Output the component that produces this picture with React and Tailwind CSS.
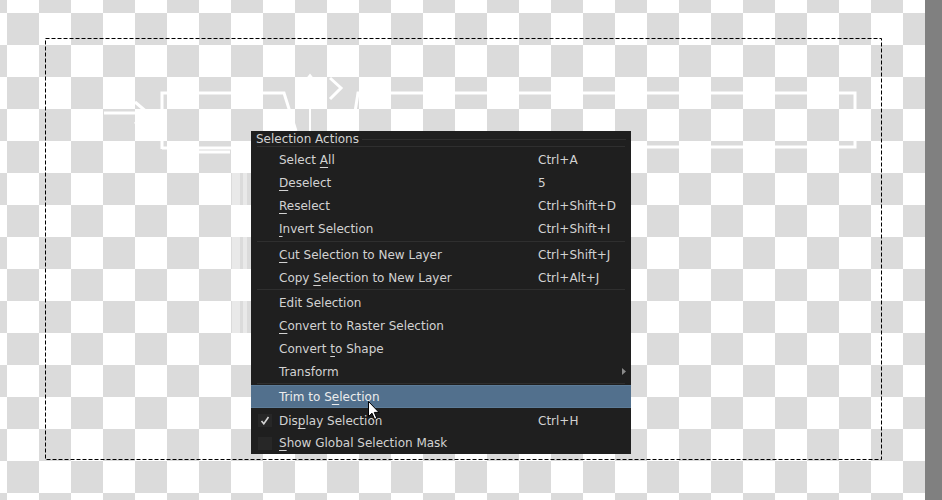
import React from "react";

const rows = [
  { pre: "Select ", u: "A", post: "ll", sc: "Ctrl+A" },
  { pre: "", u: "D", post: "eselect", sc: "5" },
  { pre: "", u: "R", post: "eselect", sc: "Ctrl+Shift+D" },
  { pre: "", u: "I", post: "nvert Selection", sc: "Ctrl+Shift+I" },
  { sep: "h-[3px] pt-px" },
  { pre: "", u: "C", post: "ut Selection to New Layer", sc: "Ctrl+Shift+J" },
  { pre: "Copy ", u: "S", post: "election to New Layer", sc: "Ctrl+Alt+J" },
  { sep: "h-[2px]" },
  { pre: "Edit Selection" },
  { pre: "", u: "C", post: "onvert to Raster Selection" },
  { pre: "Convert ", u: "t", post: "o Shape" },
  { pre: "Transform", arrow: true },
  { sep: "h-[2px]" },
  { pre: "Trim to S", u: "e", post: "lection", active: true },
  { gap: true },
  { pre: "Dis", u: "p", post: "lay Selection", sc: "Ctrl+H", check: true, checked: true },
  { pre: "", u: "S", post: "how Global Selection Mask", check: true, last: true },
];

function Row({ r }) {
  if (r.sep) {
    return (
      <div className={`${r.sep} px-[6px]`}>
        <div className="h-px bg-[#2f2f2f]" />
      </div>
    );
  }
  if (r.gap) return <div className="h-px" />;
  return (
    <div
      className={`relative flex items-center ${r.last ? "h-[22px]" : "h-[23px]"} ${
        r.active ? "bg-[#52708d] border-y border-[#5d7c98] text-[#ececec]" : ""
      }`}
    >
      <div className="w-[28px] flex justify-start pl-[7px]">
        {r.check && (
          <div className="w-[14px] h-[13px] bg-[#272727] flex items-center justify-center">
            {r.checked && (
              <svg width="10" height="9" viewBox="0 0 10 9">
                <path d="M1.5 5 L3.8 7.8 L8.5 1" fill="none" stroke="#d4d4d4" strokeWidth="1.6" />
              </svg>
            )}
          </div>
        )}
      </div>
      <div className="w-[259px] whitespace-nowrap">
        {r.pre}
        {r.u && <span className="underline decoration-1 underline-offset-[3px]">{r.u}</span>}
        {r.post}
      </div>
      <div className="whitespace-nowrap">{r.sc}</div>
      {r.arrow && (
        <svg className="absolute right-[5px] top-[8px]" width="4" height="7" viewBox="0 0 4 7">
          <path d="M0 0 L4 3.5 L0 7 Z" fill="#8a8a8a" />
        </svg>
      )}
    </div>
  );
}

function Drawing() {
  return (
    <svg className="absolute left-0 top-0" width="925" height="500" viewBox="0 0 925 500">
      <g fill="none" stroke="#ffffff" strokeWidth="3" strokeLinejoin="miter">
        <path d="M104 113 H148" />
        <path d="M135 102 L148 113 L135 124" />
        <path d="M162 149 V93 H284 L296 131" />
        <path d="M352 131 L358 93 H855 V147 H630" />
        <path d="M162 148 H252" />
        <path d="M167 152 H230" />
        <path d="M310 76 V131" strokeWidth="2" />
        <path d="M306 80 L310 75 L314 80" strokeWidth="2" />
        <path d="M330 78 L341 88 L330 99" />
      </g>
      <g fill="#ffffff" opacity="0.4">
        <rect x="232" y="160" width="8" height="176" />
        <rect x="243" y="160" width="4" height="176" />
      </g>
      <rect x="45.5" y="38.5" width="836" height="421" fill="none" stroke="#000" strokeWidth="1" strokeDasharray="4 2" />
    </svg>
  );
}

export default function App() {
  return (
    <div className="flex w-[942px] h-[500px] overflow-hidden font-['DejaVu_Sans',sans-serif]">
      <div className="relative flex-1 bg-[conic-gradient(#dbdbdb_25%,#ffffff_0_50%,#dbdbdb_0_75%,#ffffff_0)] bg-[length:64px_64px] bg-[position:-25px_13px]">
        <Drawing />

        <div className="absolute left-[251px] top-[131px] w-[380px] bg-[#1f1f1f] text-[12px] text-[#d2d2d2] leading-none">
          <div className="flex items-center h-[15px] pl-[5px] pr-[5px] gap-[3px]">
            <span className="whitespace-nowrap">Selection Actions</span>
            <div className="flex-1 h-px bg-[#2f2f2f] mt-px" />
          </div>
          <div className="mx-[6px] h-px bg-[#2f2f2f]" />
          <div className="h-px" />
          {rows.map((r, i) => (
            <Row key={i} r={r} />
          ))}
        </div>

        <svg className="absolute left-[368px] top-[401px]" width="13" height="20" viewBox="0 0 13 20">
          <path
            d="M0.5 0.5 L0.5 15.5 L4 12.2 L6.6 18.3 L8.8 17.3 L6.3 11.4 L11 11.4 Z"
            fill="#ffffff"
            stroke="#000000"
            strokeWidth="1"
            strokeLinejoin="round"
          />
        </svg>
      </div>
      <div className="w-[17px] bg-[#808080]" />
    </div>
  );
}
